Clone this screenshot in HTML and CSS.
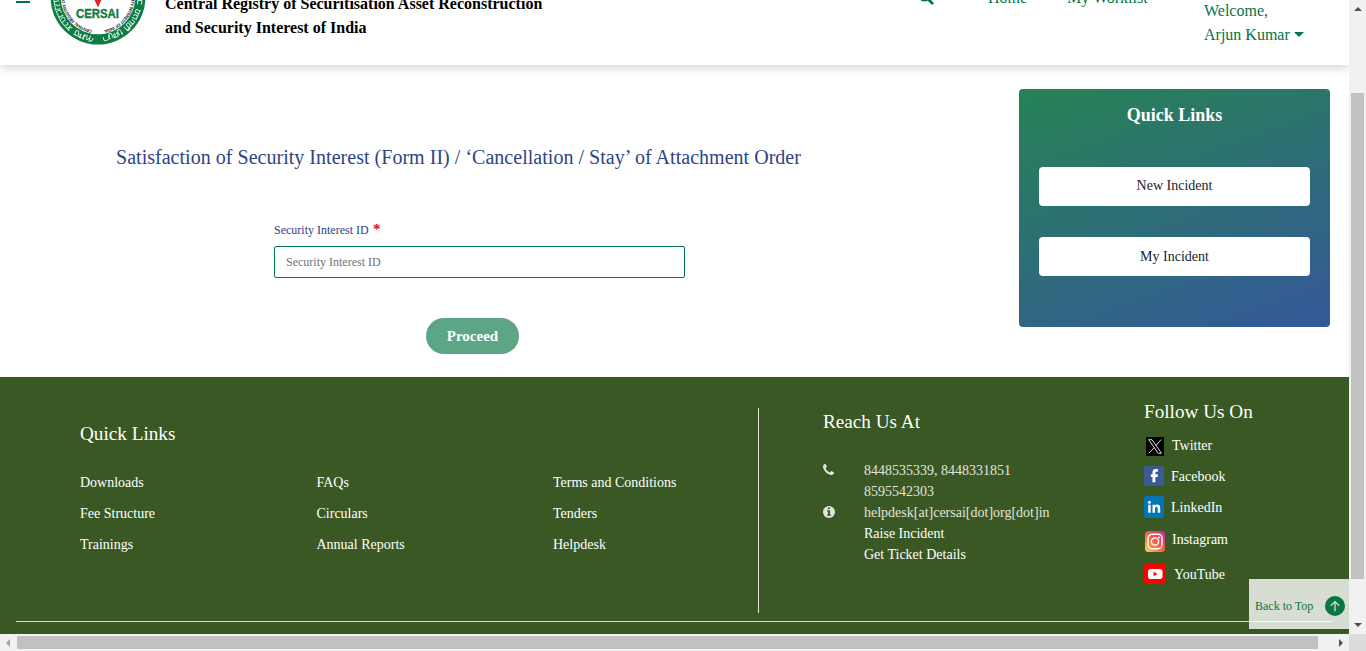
FILE: index.html
```html
<!DOCTYPE html>
<html lang="en">
<head>
<meta charset="utf-8">
<title>CERSAI - Satisfaction of Security Interest</title>
<link rel="stylesheet" href="styles.css">
</head>
<body>
<div class="window">
  <div class="viewport">
    <header class="header">
      <div class="menu"><i></i><i></i><i></i></div>
      <svg class="logo" viewBox="-48 -48 96 96">
        <defs><path id="ring" d="M0 33.5A33.5 33.5 0 1 1 .01 33.5"/></defs>
        <circle r="47.5" fill="#0b7d43"/>
        <circle r="37.3" fill="#fff"/>
        <text class="logo-ring"><textPath href="#ring" startOffset="6" textLength="198">CENTRAL REGISTRY OF SECURITISATION ASSET RECONSTRUCTION AND SECURITY INTEREST OF INDIA</textPath></text>
        <path d="M-10-18L0-12 12-18 5-1 0 10-5 0-11-2z" fill="#e8202a"/><path d="M-5-9L6-8 0 5z" fill="#f8d21c"/><path d="M-3 2L4 1 0 10z" fill="#e8202a"/>
        <text class="logo-name" x="-.5" y="20.500" text-anchor="middle" textLength="43" lengthAdjust="spacingAndGlyphs">CERSAI</text>
        <g fill="none" stroke="#d5ecdf" stroke-width="1">
          <g transform="rotate(14)"><path d="M-4 39v6M-4 42q3-5 3 0t3-1M2 39v6q4-1 3-4"/></g>
          <g transform="rotate(27)"><path d="M-5 44h9M-4 44v-4q3-2 3 1t3 0v4M5 40v5"/></g>
          <g transform="rotate(48)"><path d="M-6 44h12M-5 39v5M-2 40q4 0 1 3M3 39v5M6 40q-4 1-1 3"/></g>
          <g transform="rotate(64)"><path d="M-6 44h12M-5 44q-1-6 3-4M1 39v5M5 39q-4 1-1 4"/></g>
          <g transform="rotate(80)"><path d="M-5 44h10M-3 39v5M0 39q4 1 0 4M5 39v6"/></g>
          <g transform="rotate(-16)"><path d="M-6 40q-1 5 3 4t2-4M0 44V39q3-2 3 2t3 1v-3"/></g>
          <g transform="rotate(-28)"><path d="M-4 40v4h3q2-2 0-4M1 44v-5q4-1 3 3t1 1"/></g>
          <g transform="rotate(-48)"><path d="M-6 44H5M-5 39v6h3v-5q3-2 3 1t-2 3M3 39v5h3v-4"/></g>
          <g transform="rotate(-65)"><path d="M-5 44H6M-4 39v5h3q2-3-1-4M2 44v-4h3v4"/></g>
          <g transform="rotate(-84)"><path d="M-3 40h4v4h-4M3 39v6"/></g>
        </g>
      </svg>
      <div class="org">Central Registry of Securitisation Asset Reconstruction<br>and Security Interest of India</div>
      <svg class="search" viewBox="0 0 16 16"><circle cx="6.4" cy="6.4" r="5" fill="none" stroke="#037645" stroke-width="2.2"/><path d="M10.2 10.2L14.2 14.2" stroke="#037645" stroke-width="2.8" stroke-linecap="round"/></svg>
      <nav class="nav"><a class="home">Home</a><a class="work">My Worklist</a></nav>
      <div class="user">Welcome,<br>Arjun Kumar <span class="caret"></span></div>
    </header>

    <main class="main">
      <section class="content">
        <h1 class="title">Satisfaction of Security Interest (Form II) / ‘Cancellation / Stay’ of Attachment Order</h1>
        <form class="form">
          <label class="label" for="sid"><span class="label-text">Security Interest ID</span><span class="req">*</span></label>
          <input class="input" id="sid" placeholder="Security Interest ID">
          <button class="proceed" type="button"><span class="proceed-text">Proceed</span></button>
        </form>
      </section>
      <aside class="quick">
        <h2 class="quick-title"><span>Quick Links</span></h2>
        <a class="quick-btn new"><span>New Incident</span></a>
        <a class="quick-btn mine"><span>My Incident</span></a>
      </aside>
    </main>

    <footer class="footer">
      <div class="cols">
        <section class="links">
          <h3 class="foot-title">Quick Links</h3>
          <div class="link-grid">
            <a>Downloads</a><a>FAQs</a><a>Terms and Conditions</a>
            <a>Fee Structure</a><a>Circulars</a><a>Tenders</a>
            <a>Trainings</a><a>Annual Reports</a><a>Helpdesk</a>
          </div>
        </section>
        <section class="reach">
          <h3 class="foot-title">Reach Us At</h3>
          <div class="reach-grid">
            <svg class="phone" viewBox="0 0 1408 1408"><path fill="#e0e4dc" d="M1408 1112q0 27-10 70.500t-21 68.500q-21 50-122 106-94 51-186 51-27 0-53-3.500t-57.500-12.500-47-14.500-55.500-20.500-49-18q-98-35-175-83-127-79-264-216T152 776q-48-77-83-175-3-9-18-49t-20.500-55.500-14.500-47T3.500 392 0 339q0-92 51-186Q107 52 157 31q25-11 68.500-21T296 0q14 0 21 3 18 6 53 76 11 19 30 54t35 63.500 31 53.500q3 4 17.500 25t21.500 35.500 7 28.500q0 20-28.500 50t-62 55-62 53-28.500 46q0 9 5 22.500t8.500 20.500 14 24 11.500 19q76 137 174 235t235 174q2 1 19 11.500t24 14 20.500 8.500 22.500 5q18 0 46-28.500t53-62 55-62 50-28.500q14 0 28.500 7t35.500 21.500 25 17.500q25 15 53.500 31t63.500 35 54 30q70 35 76 53 3 7 3 21z"/></svg>
            <p>8448535339, 8448331851</p><i></i><p>8595542303</p>
            <svg class="info" viewBox="0 0 12 12"><circle cx="6" cy="6" r="6" fill="#e0e4dc"/><path fill="#3a5824" d="M5 1.500h2v1.600H5zM4 4.200h3v4.300h1v1.300H4V8.500h1v-3H4z"/></svg>
            <p class="mail">helpdesk[at]cersai[dot]org[dot]in</p><i></i><a class="raise">Raise Incident</a><i></i><a class="ticket">Get Ticket Details</a>
          </div>
        </section>
        <section class="follow">
          <h3 class="foot-title">Follow Us On</h3>
          <a class="social tw"><svg viewBox="0 0 18 19"><path fill="#000" d="M0 0h18v19H0z"/><path fill="none" stroke="#ddd" stroke-width="1" d="M2.700 2.700h3.300l9.500 13.600h-3.300zM15 2.700L10 8.400M8.200 10.700L2.700 16.300"/></svg><span>Twitter</span></a>
          <a class="social fb"><svg viewBox="0 0 20 20"><rect width="20" height="20" rx="3" fill="#3d5a98"/><path fill="#fff" d="M8.500 16.200V11H6.900V8.200h1.600V6.600c0-2.400 1.100-3.500 3.300-3.500h2.100v2.700h-1.400c-.9 0-1.100.4-1.100 1.100v1.300h2.500l-.3 2.800h-2.200v5.200z"/></svg><span>Facebook</span></a>
          <a class="social li"><svg viewBox="0 0 20 22" preserveAspectRatio="none"><rect width="20" height="22" rx="3" fill="#0176b4"/><path fill="#fff" d="M4.200 8.700h2.500v8.100H4.200zM8.500 8.700h2.400v1.100c1.300-2 5.300-1.800 5.300 2v5h-2.500v-4.300c0-2.500-2.700-2.200-2.700 0v4.300H8.500z"/><circle cx="5.450" cy="6.200" r="1.500" fill="#fff"/></svg><span>LinkedIn</span></a>
          <a class="social ig"><svg viewBox="0 0 20 21"><defs><linearGradient id="igc" x1="0" y1="1" x2="1" y2="0"><stop offset="0" stop-color="#ffdc59"/><stop offset=".3" stop-color="#fb8a45"/><stop offset=".6" stop-color="#f2504f"/><stop offset="1" stop-color="#b42fae"/></linearGradient></defs><rect width="20" height="21" rx="3.500" fill="url(#igc)"/><g fill="none" stroke="#fff" stroke-width="1.400"><rect x="3" y="3.300" width="14" height="14.400" rx="4"/><circle cx="10" cy="10.500" r="3.600"/></g><circle cx="14" cy="6.500" r=".9" fill="#fff"/></svg><span>Instagram</span></a>
          <a class="social yt"><svg viewBox="0 0 22 20"><rect width="22" height="20" rx="3" fill="#f00"/><rect x="4" y="5" width="14.500" height="10" rx="2.800" fill="#fff"/><path fill="#f00" d="M9.600 7.800v4.400l3.900-2.200z"/></svg><span>YouTube</span></a>
        </section>
      </div>
      <div class="rule"></div>
    </footer>
    <a class="top"><span>Back to Top</span><svg viewBox="0 0 20 20"><circle cx="10" cy="10" r="10" fill="#0b7543"/><path fill="none" stroke="#d8ded4" stroke-width="1.300" d="M10 15.200V5.600M5.800 9.800L10 5.600l4.200 4.200"/></svg></a>
  </div>
  <div class="vbar"><i class="arrow up"></i><i class="thumb"></i><i class="arrow down"></i></div>
  <div class="hbar"><i class="arrow left"></i><i class="thumb"></i><i class="arrow right"></i></div>
  <div class="corner"></div>
</div>
</body>
</html>
```

FILE: styles.css
```css
* { box-sizing: border-box; }
body { margin: 0; font-family: "Liberation Serif", "Times New Roman", serif; overflow: hidden; }
h1, h2, h3, p { margin: 0; font-weight: 400; }
span { white-space: nowrap; }
svg { display: block; flex: none; }

.window { display: grid; grid-template: 634px 17px / 1349px 17px; }
.viewport { position: relative; overflow: hidden; background: #fff; }

/* header, scrolled partly out of view */
.header { display: flex; align-items: flex-start; height: 145px; margin-top: -80px; background: #fff; box-shadow: 0 2px 10px rgba(0,0,0,.2); }
.menu { display: grid; gap: 4px; width: 14px; margin: 67px 0 0 16px; }
.menu i { height: 2px; background: #037645; }
.menu i:last-child { margin-top: 2px; }
.logo { width: 96px; height: 96px; margin: 29px 0 0 20px; }
.logo-ring { font: 700 4.300px "Liberation Sans", sans-serif; fill: #222; }
.logo-name { font: 700 13.500px "Liberation Sans", sans-serif; fill: #0b7d43; stroke: #0b7d43; stroke-width: .4px; }
.org { width: 430px; margin: 72px 0 0 19px; font-size: 16px; font-weight: 700; line-height: 24px; white-space: nowrap; }
.search { width: 16px; height: 16px; margin: 69px 0 0 323px; }
.nav { display: flex; gap: 39px; margin: 66px 0 0 54px; font-size: 16px; line-height: 24px; color: #037645; }
.home { width: 40px; }
.work { width: 81px; white-space: nowrap; }
.user { margin: 79px 0 0 56px; font-size: 16px; line-height: 24px; color: #037645; white-space: nowrap; }
.caret { display: inline-block; border: 5px solid transparent; border-top-color: #037645; border-bottom: 0; vertical-align: 3px; }

.main { display: flex; justify-content: space-between; height: 312px; padding: 24px 19px 0 116px; }
.content { width: 800px; padding-top: 56px; }
.title { font-size: 20px; line-height: 25px; letter-spacing: .025px; color: #2d4486; white-space: nowrap; }
.form { display: grid; justify-items: start; width: 411px; margin: 51px 0 0 158px; }
.label { display: flex; height: 25px; font-size: 12px; line-height: 18px; color: #2d4486; }
.label-text { width: 99px; }
.req { color: #f00020; font-size: 15px; font-weight: 700; line-height: 16px; }
.input { width: 411px; height: 32px; padding: 0 11px; border: 1px solid #037645; border-radius: 2px; font: 12px "Liberation Serif", serif; }
.input::placeholder { color: #6c757d; }
.proceed { width: 93px; height: 36px; margin: 40px 0 0 152px; padding: 0; border: 0; border-radius: 18px; background: #5ca686; color: #fff; font: 700 15px "Liberation Serif", serif; }

.quick { width: 311px; height: 238px; padding: 13px 20px 0; border-radius: 4px; background: linear-gradient(160deg, #268354, #35589a); text-align: center; }
.quick-title { font-size: 18px; font-weight: 700; line-height: 27px; color: #fff; }
.quick-btn { display: block; height: 39px; border-radius: 4px; background: #fff; font-size: 14px; line-height: 37px; color: #212529; }
.new { margin-top: 38px; }
.mine { margin-top: 31px; line-height: 39px; }

.footer { height: 257px; background: #3a5824; color: #fff; }
.cols { display: flex; height: 244px; }
.foot-title { font-size: 19.200px; line-height: 24px; white-space: nowrap; }
.links { width: 759px; height: 205px; margin-top: 31px; padding: 14px 0 0 80px; border-right: 1px solid #e4e8e0; }
.link-grid { display: grid; grid-template-columns: 236.500px 236.500px 1fr; margin-top: 21px; font-size: 14px; line-height: 31px; white-space: nowrap; }
.reach { width: 322px; padding: 33px 0 0 64px; }
.reach-grid { display: grid; grid-template-columns: 41px 1fr; margin-top: 26px; font-size: 14px; line-height: 21px; white-space: nowrap; }
.reach-grid p { color: #e0e4dc; }
.reach-grid a { color: #fff; }
.phone { width: 11px; height: 11px; margin-top: 4px; }
.info { width: 12px; height: 12px; margin-top: 4px; }
.follow { padding: 23px 0 0 63px; }
.social { display: flex; align-items: center; font-size: 14px; line-height: 20px; }
.social span { padding-top: 1px; margin-bottom: -1px; }
.tw { margin: 12px 0 0 2px; gap: 8px; }
.tw svg { width: 18px; height: 19px; }
.tw span { padding-top: 0; margin-bottom: 1px; }
.fb, .li { gap: 7px; }
.fb { margin-top: 9px; }
.fb svg { width: 20px; height: 20px; }
.li { margin-top: 10px; }
.li svg { width: 20px; height: 22px; }
.ig { margin: 12px 0 0 1px; gap: 7px; }
.ig svg { width: 20px; height: 21px; }
.ig span { padding-top: 0; margin-bottom: 2px; }
.yt { margin-top: 12px; gap: 8px; }
.yt svg { width: 22px; height: 20px; }
.rule { height: 1px; margin: 0 16px; background: #d8ddd3; }

.top { position: absolute; left: 1249px; top: 579px; display: flex; align-items: center; justify-content: space-between; width: 100px; height: 50px; padding: 4px 4px 0 6px; background: rgba(255,255,255,.8); font-size: 12px; color: #0b7543; }
.top svg { width: 20px; height: 20px; }

/* window scrollbars */
.vbar { display: flex; flex-direction: column; align-items: center; background: #f1f1f1; }
.vbar .thumb { width: 13px; height: 486px; margin-top: 82px; background: #c1c1c1; }
.hbar { display: flex; align-items: center; background: #f1f1f1; }
.hbar .thumb { width: 1301px; height: 13px; margin-left: 7px; background: #c1c1c1; }
.corner { background: #dcdcdc; }
.arrow { border: 4px solid transparent; }
.up { margin-top: 7px; border-top: 0; border-bottom-color: #505050; }
.down { margin-top: 44px; border-bottom: 0; border-top-color: #505050; }
.left { margin-left: 6px; border-left: 0; border-right-color: #a3a3a3; }
.right { margin-left: 21px; border-right: 0; border-left-color: #505050; }
```
